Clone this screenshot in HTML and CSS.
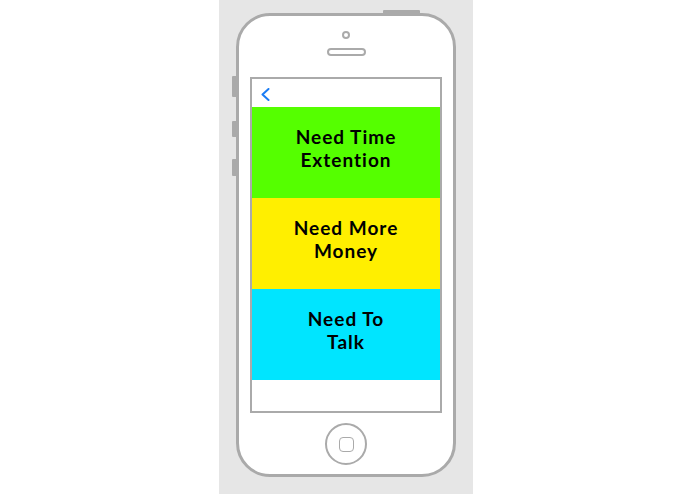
FILE: index.html
```html
<!DOCTYPE html>
<html>
<head>
<meta charset="utf-8">
<link rel="stylesheet" href="styles.css">
</head>
<body>
<div class="page">
  <div class="blank"></div>
  <div class="panel">
    <div class="phone">
      <span class="btn-top"></span>
      <span class="btn-side b1"></span>
      <span class="btn-side b2"></span>
      <span class="btn-side b3"></span>
      <div class="camera"></div>
      <div class="speaker"></div>
      <div class="screen">
        <div class="nav">
          <svg class="back" width="9" height="13" viewBox="0 0 9 13"><polyline points="7.5,1 1.5,6.5 7.5,12" fill="none" stroke="#1a7cf4" stroke-width="2" stroke-linecap="round" stroke-linejoin="round"/></svg>
        </div>
        <div class="block green">Need Time<br>Extention</div>
        <div class="block yellow">Need More<br>Money</div>
        <div class="block cyan">Need To<br>Talk</div>
        <div class="rest"></div>
      </div>
      <div class="home"><div class="home-sq"></div></div>
    </div>
  </div>
  <div class="blank"></div>
</div>
</body>
</html>
```
FILE: styles.css
```css
html, body { margin: 0; padding: 0; background: #fff; }
.page { display: flex; width: 695px; height: 494px; }
.blank { flex: 1; }
.page .blank:first-child { flex: 0 0 219px; }
.panel { flex: 0 0 254px; background: #e6e6e6; padding: 13px 0 0 17px; box-sizing: border-box; }
.phone {
  position: relative;
  width: 220px; height: 464px; box-sizing: border-box;
  border: 3px solid #aaaaaa; border-radius: 34px; background: #fff;
  display: flex; flex-direction: column; align-items: center;
}
.btn-top { position: absolute; top: -6px; left: 144px; width: 37px; height: 4px; background: #aaaaaa; border-radius: 1px; }
.btn-side { position: absolute; left: -7px; width: 4px; background: #aaaaaa; border-radius: 1px 0 0 1px; }
.b1 { top: 60px; height: 21px; }
.b2 { top: 105px; height: 16px; }
.b3 { top: 143px; height: 17px; }
.camera { margin-top: 15px; width: 4px; height: 4px; border: 2px solid #aaaaaa; border-radius: 50%; }
.speaker { margin-top: 9px; width: 35px; height: 4px; border: 2px solid #aaaaaa; border-radius: 5px; }
.screen {
  margin-top: 21px; width: 192px; height: 336px; box-sizing: border-box;
  border: 2px solid #aaaaaa; display: flex; flex-direction: column;
}
.nav { height: 28px; flex: 0 0 28px; padding: 9px 0 0 9px; box-sizing: border-box; }
.back { display: block; }
.block {
  flex: 0 0 91px; display: flex; align-items: center; justify-content: center; text-align: center;
  font-family: Lato, "Open Sans", sans-serif; font-weight: 700; font-size: 19px; line-height: 23px;
  letter-spacing: 1px; color: #000;
  padding-bottom: 10px; box-sizing: border-box;
}
.green { background: #55ff00; }
.yellow { background: #ffef00; }
.cyan { background: #00e5ff; }
.rest { flex: 1; }
.home {
  margin-top: 10px; width: 38px; height: 38px; border: 2px solid #aaaaaa; border-radius: 50%;
  display: flex; align-items: center; justify-content: center;
}
.home-sq { width: 13px; height: 13px; border: 1.5px solid #aaaaaa; border-radius: 4px; }
```
